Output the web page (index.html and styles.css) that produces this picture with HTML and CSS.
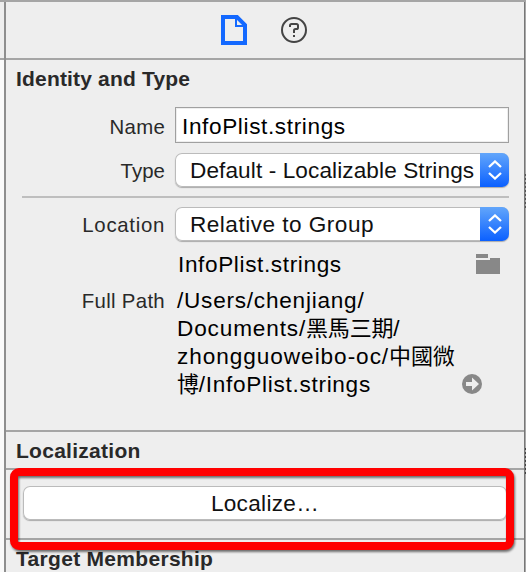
FILE: index.html
```html
<!DOCTYPE html>
<html lang="en">
<head>
<meta charset="utf-8">
<title>File Inspector</title>
<link rel="stylesheet" href="styles.css">
</head>
<body>
<div class="window">
  <div class="gutter"></div>
  <main class="inspector">
    <nav class="tabs">
      <svg class="tab-file" width="26" height="30" viewBox="0 0 26 30"><path d="M2 2H16L24 10V28H2Z" fill="none" stroke="#1469ff" stroke-width="4"/><path d="M15 4V11H22" fill="none" stroke="#1469ff" stroke-width="2"/></svg>
      <svg class="tab-help" width="26" height="26" viewBox="0 0 26 26"><circle cx="13" cy="13" r="12" fill="none" stroke="#444" stroke-width="2"/><path d="M9 10V8.600Q9 7 10.600 7H15.400Q17 7 17 8.600V10.400Q17 12 15.400 12H14.500Q13 12 13 13.500V16" fill="none" stroke="#444" stroke-width="2"/><path d="M12 18h2v2h-2z" fill="#444"/></svg>
    </nav>
    <section class="identity">
      <h2 class="heading"><span class="t-identity">Identity and Type</span></h2>
      <div class="row row-name"><label class="label t-name">Name</label><div class="field"><span class="t-file">InfoPlist.strings</span></div></div>
      <div class="row row-type"><label class="label t-type">Type</label><div class="select"><span class="t-default">Default - Localizable Strings</span><span class="stepper"><svg width="14" height="20" viewBox="0 0 14 20"><path d="M1 7L7 1.500L13 7M1 13L7 18.500L13 13" /></svg></span></div></div>
      <hr class="divider">
      <div class="row row-location"><label class="label t-location">Location</label><div class="select"><span class="t-relative">Relative to Group</span><span class="stepper"><svg width="14" height="20" viewBox="0 0 14 20"><path d="M1 7L7 1.500L13 7M1 13L7 18.500L13 13" /></svg></span></div></div>
      <div class="row row-file"><span class="value t-file">InfoPlist.strings</span><svg class="folder" width="24" height="20" viewBox="0 0 24 20"><path d="M0 0H12V4H0ZM0 6H14V4H24V20H0Z" fill="#888"/></svg></div>
      <div class="row row-path"><label class="label t-path">Full Path</label><div class="path"><span class="p1">/Users/chenjiang/</span><br><span class="p2">Documents/<span class="cjk">黑馬三期</span>/</span><br><span class="p3">zhongguoweibo-oc/<span class="cjk">中國微</span></span><br><span class="p4"><span class="cjk">博</span>/InfoPlist.strings</span></div><svg class="arrow" width="20" height="20" viewBox="0 0 20 20"><circle cx="10" cy="10" r="10" fill="#888"/><path d="M4 8H10V3.500L17 10L10 16.500V12H4Z" fill="#eee"/></svg></div>
    </section>
    <section class="localization"><h2 class="heading"><span class="t-localization">Localization</span></h2></section>
    <section class="localize"><div class="button"><span class="t-button">Localize…</span></div><div class="highlight"></div></section>
    <section class="target"><h2 class="heading"><span class="t-target">Target Membership</span></h2></section>
  </main>
  <div class="edge"></div>
</div>
</body>
</html>
```
FILE: styles.css
```css
* { box-sizing: border-box; }
body { margin: 0; width: 526px; height: 572px; overflow: hidden; background: #eee; color: #111; font: 22.6px/28px "Liberation Sans", "Noto Sans CJK TC", sans-serif; }
.window { height: 572px; display: grid; grid-template-columns: 4px 521px 1px; border-top: 2px solid #a5a5a5; }
.gutter { background: linear-gradient(#eee 56px, #a5a5a5 56px 58px, #fafafa 58px); }
.inspector { border-left: 2px solid #8e8e8e; border-right: 1px solid #777; }
.edge { background: repeating-linear-gradient(#555 0 2px, #aaa 2px 4px) 0 172px / 1px 36px no-repeat, repeating-linear-gradient(#444 0 2px, #aaa 2px 4px) 0 446px / 1px 26px no-repeat, #a8a8a8; }
.tabs { height: 58px; display: flex; align-items: flex-start; padding: 13px 0 0 215px; gap: 34px; border-bottom: 2px solid #a5a5a5; }
.tab-help { margin-top: 2px; }
.identity { height: 370px; }
.heading { margin: 0; padding-left: 10px; font-size: 21px; line-height: 28px; color: #292929; }
.identity .heading { padding-top: 5px; }
.row { display: flex; white-space: nowrap; }
.label { width: 159px; text-align: right; font-size: 20.4px; color: #292929; margin-right: 10px; }
.row-name { padding-top: 14px; }
.row-name .label { padding-top: 6px; }
.field { width: 334px; height: 36px; border: 1px solid #a0a0a0; background: #fff; padding: 5px 6px; color: #000; box-shadow: inset 0 0 0 1px #eee; }
.row-type { padding-top: 10px; }
.row-type .label, .row-location .label { padding-top: 4px; }
.select { width: 334px; height: 34px; background: #fff; border-radius: 7px; display: flex; justify-content: space-between; padding: 4px 0 0 15px; box-shadow: inset 0 0 0 1px #bbb, 0 1px 1px #aaa; }
.stepper { flex: none; width: 29px; height: 34px; margin-top: -4px; background: linear-gradient(#62a6fb, #0b60ff); border-radius: 0 7px 7px 0; display: grid; place-items: center; }
.stepper path { fill: none; stroke: #fff; stroke-width: 2.300; }
.divider { margin: 9px 15px 0 16px; border: 0; height: 2px; background: #bebebe; }
.row-location { padding-top: 9px; }
.row-file { padding: 10px 0 0 172px; justify-content: space-between; color: #000; }
.folder { margin: 3px 24px 0 0; }
.row-path { padding-top: 8px; color: #000; }
.row-path .label { margin-right: 4px; }
.path { width: 293px; padding-left: 8px; }
.arrow { margin: 87px 0 0 0; }
.localization { height: 38px; border-top: 2px solid #a5a5a5; padding-top: 5px; }
.localize { height: 70px; border-top: 2px solid #a5a5a5; padding: 16px 0 0 17px; position: relative; }
.button { width: 484px; height: 34px; border-radius: 7px; background: #fff; text-align: center; padding-top: 4px; box-shadow: inset 0 0 0 1px #bbb, 0 1px 1px #aaa; }
.highlight { position: absolute; left: 4px; top: -2px; width: 504px; height: 82px; border: 8px solid #f00; border-radius: 9px; filter: drop-shadow(1px 2px 1px #0008); }
.target { border-top: 2px solid #a5a5a5; padding-top: 5px; }
.t-identity { letter-spacing: .18px; }
.t-localization { letter-spacing: .27px; }
.t-target { letter-spacing: .3px; }
.t-name { letter-spacing: .25px; }
.t-type { letter-spacing: .05px; }
.t-location { letter-spacing: .7px; }
.t-path { letter-spacing: .3px; }
.t-file { letter-spacing: .62px; }
.t-default { letter-spacing: .1px; }
.t-relative { letter-spacing: .48px; }
.t-button { letter-spacing: .3px; }
.p1 { letter-spacing: .76px; }
.p2 { letter-spacing: .85px; }
.p3 { letter-spacing: .95px; }
.p4 { letter-spacing: .7px; }
.cjk { font-size: 22px; letter-spacing: -.2px; }
```
